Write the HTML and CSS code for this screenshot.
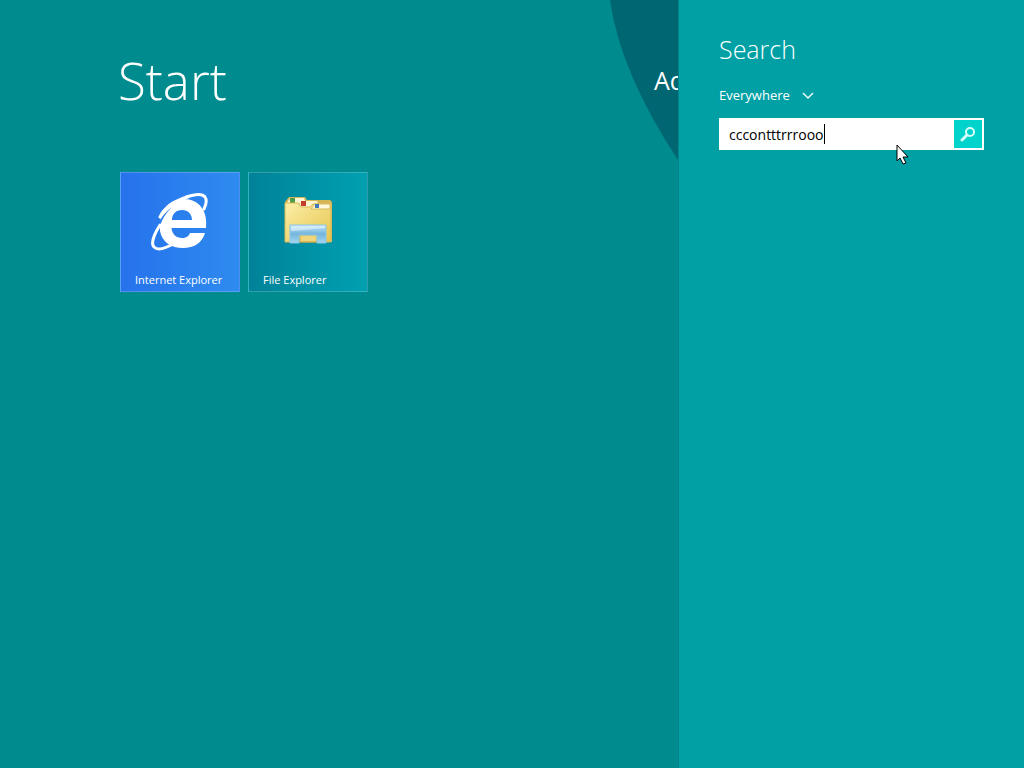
FILE: index.html
```
<!DOCTYPE html>
<html lang="en">
<head>
  <meta charset="utf-8">
  <meta name="viewport" content="width=device-width, initial-scale=1">
  <title>Start</title>
  <link rel="stylesheet" href="styles.css">
</head>
<body>
  <main class="start">
    <svg class="swirl" viewBox="0 0 68 160" aria-hidden="true">
      <path d="M0 0Q10 72 68 160V0Z" fill="#006672"/>
    </svg>
    <header class="start-header">
      <h1>Start</h1>
      <div class="user">Ad</div>
    </header>
    <nav class="tiles">
      <a class="tile ie" href="#">
        <svg class="tile-icon" viewBox="0 0 60 60" aria-hidden="true">
          <path fill="#fff" fill-rule="evenodd" d="M55 40H40C39 43 36 45 32 45C26 45 22 41 21.500 35H56C58 18 49 6 34 6C21 6 12 14 10 27C14 21 18 17 22 14C14 22 9 31 10 38C12 49 21 55 33 55C44 55 52 50 55 40ZM22 27C22 21 26 17 32 17C38 17 42 21 42 27Z"/>
          <path fill="none" stroke="#fff" stroke-width="3" stroke-linecap="round" d="M36 4C45 1 52 0 55 4C57 7 56 12 54 16M10 32C3 43 1 51 4 54C8 58 16 55 23 51M10 24C14 15 25 7 38 4"/>
        </svg>
        <span>Internet Explorer</span>
      </a>
      <a class="tile explorer" href="#">
        <svg class="tile-icon" viewBox="0 0 60 60" aria-hidden="true">
          <defs>
            <linearGradient id="folder" x1="0" y1="0" x2="1" y2="1">
              <stop offset="0" stop-color="#fcefa8"/>
              <stop offset="1" stop-color="#e6c44e"/>
            </linearGradient>
            <linearGradient id="stand" x1="0" y1="0" x2="0" y2="1">
              <stop offset="0" stop-color="#c8e8f8"/>
              <stop offset=".5" stop-color="#73b4dc"/>
              <stop offset="1" stop-color="#a4d8f0"/>
            </linearGradient>
          </defs>
          <path fill="#d4b558" d="M7 9L11 4H27L29 7H52L54 9V49H7Z"/>
          <path fill="#fff7d4" d="M9 10L12 5H26L28 10Z"/>
          <path fill="#4d9a48" d="M12 5h5v5h-5z"/>
          <path fill="#fff4d0" d="M20 14L23 8H39L41 14Z"/>
          <path fill="#c43d2a" d="M23 8h5v5h-5z"/>
          <path fill="url(#folder)" stroke="#d8bb59" d="M7 10H20L23 14H32L35 11H53V49H7Z"/>
          <path fill="#fff8df" stroke="#d8bb59" d="M33 16L37 11H52V16Z"/>
          <path fill="#407ab5" d="M37 11h4v4h-4z"/>
          <path fill="#f0d67a" stroke="#c5a13f" d="M22 42H39V49H22Z"/>
          <path fill="url(#stand)" stroke="#8bc7e6" d="M12 32H48V50H39V42H21V50H12Z"/>
          <path fill="#e5f5fc" opacity=".6" d="M13 33H47V35L13 38Z"/>
        </svg>
        <span>File Explorer</span>
      </a>
    </nav>
  </main>
  <aside class="search">
    <h2>Search</h2>
    <div class="scope">
      <select aria-label="Search scope">
        <option>Everywhere</option>
      </select>
      <svg class="chevron" viewBox="0 0 12 8" aria-hidden="true">
        <path d="M1 2L6 7L11 2" fill="none" stroke="currentColor" stroke-width="1.300"/>
      </svg>
    </div>
    <form class="search-box">
      <input type="text" value="cccontttrrrooo" aria-label="Search" spellcheck="false" autofocus>
      <span class="caret"></span>
      <button type="button" aria-label="Search">
        <svg viewBox="0 0 16 16" aria-hidden="true">
          <circle cx="10" cy="6" r="4" fill="none" stroke="#d8fffd" stroke-width="2"/>
          <path d="M7 9L2 14" stroke="#d8fffd" stroke-width="3" stroke-linecap="round"/>
        </svg>
      </button>
      <svg class="pointer" viewBox="0 0 13 21" aria-hidden="true">
        <path d="M1 1V17L4 14L7 20L10 19L7 13H12Z" fill="#fff" stroke="#000"/>
      </svg>
    </form>
  </aside>
</body>
</html>
```
FILE: styles.css
```
* {
  box-sizing: border-box;
}
body {
  margin: 0;
  min-height: 100vh;
  display: flex;
  font-family: "Open Sans", "Noto Sans", sans-serif;
  color: #fff;
  background: #008b8e;
}
h1, h2 {
  margin: 0;
  font-weight: 300;
}

.start {
  flex: 1;
  min-width: 0;
  position: relative;
  overflow: hidden;
  padding: 44px 0 0 118px;
}
.swirl {
  position: absolute;
  top: 0;
  right: 0;
  width: 68px;
  height: 160px;
}
.start-header {
  position: relative;
  display: flex;
  justify-content: space-between;
  height: 128px;
}
.start-header h1 {
  font-size: 51px;
  line-height: 72px;
}
.user {
  width: 24px;
  font-size: 25px;
  line-height: 72px;
  white-space: nowrap;
}

.tiles {
  display: flex;
  gap: 8px;
  padding-left: 2px;
}
.tile {
  width: 120px;
  height: 120px;
  padding: 20px 14px 3px;
  display: flex;
  flex-direction: column;
  justify-content: space-between;
  border: 1px solid rgba(255,255,255,.2);
  color: #fff;
  font-size: 11px;
  line-height: 16px;
  text-decoration: none;
  white-space: nowrap;
}
.tile.ie {
  background: linear-gradient(90deg, #2672ec, #2e8bef);
}
.tile.explorer {
  background: linear-gradient(90deg, #008299, #00a0b1);
}
.tile-icon {
  width: 60px;
  height: 60px;
  align-self: center;
}

.search {
  width: 346px;
  padding: 31px 40px;
  border-left: 1px solid #008489;
  background: #00a0a4;
}
.search h2 {
  font-size: 25px;
  font-weight: 350;
  line-height: 36px;
}
.scope {
  display: flex;
  align-items: center;
  gap: 12px;
  margin: 17px 0 12px;
}
.scope select {
  appearance: none;
  padding: 0;
  border: 0;
  background: none;
  color: #fff;
  font: 13px/22px "Open Sans", "Noto Sans", sans-serif;
}
.chevron {
  width: 12px;
  height: 8px;
}
.search-box {
  position: relative;
  display: flex;
  height: 32px;
  padding: 2px;
  background: #fff;
}
.search-box input {
  flex: 1;
  min-width: 0;
  padding: 0 8px;
  border: 0;
  outline: 0;
  background: #fff;
  color: #000;
  caret-color: transparent;
  font: 14px "Open Sans", "Noto Sans", sans-serif;
}
.caret {
  position: absolute;
  left: 105px;
  top: 6px;
  width: 1px;
  height: 20px;
  background: #000;
}
.search-box button {
  width: 28px;
  padding: 6px;
  border: 0;
  background: #00d2cc;
}
.search-box button svg {
  display: block;
  width: 16px;
  height: 16px;
}
.pointer {
  position: absolute;
  right: 75px;
  top: 26px;
  width: 13px;
  height: 21px;
}
```
